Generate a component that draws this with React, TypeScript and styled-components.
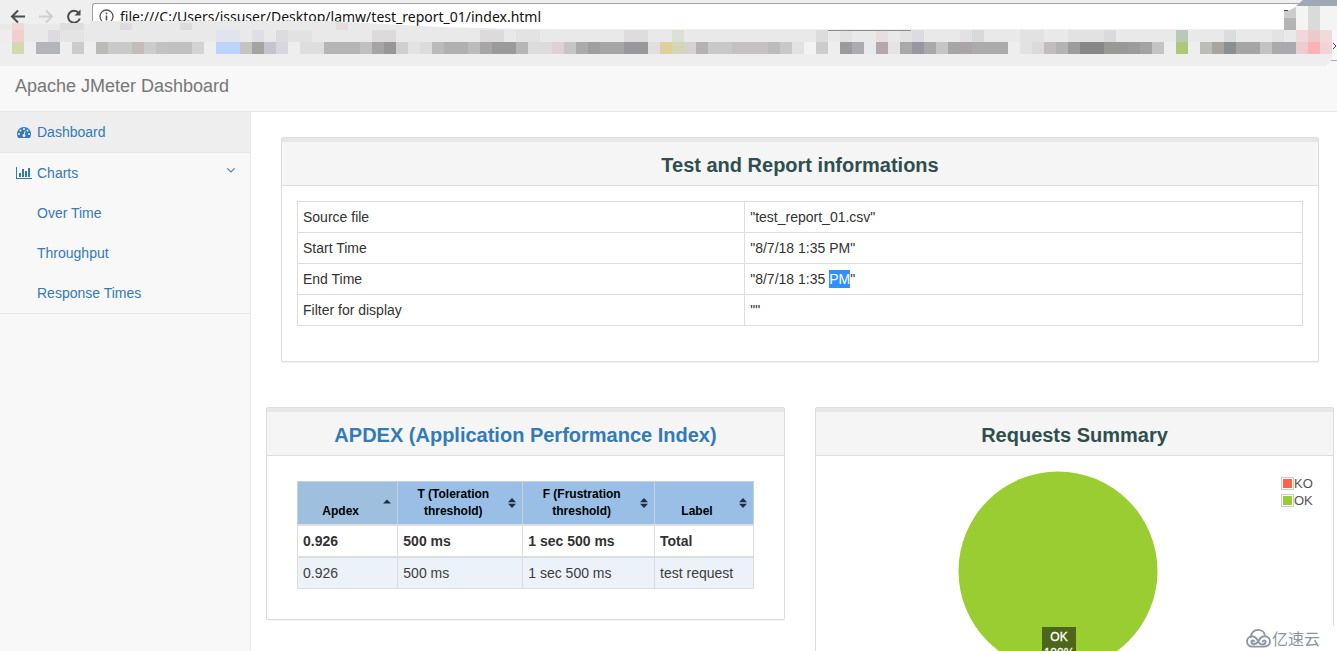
import React from 'react';
import styled, { createGlobalStyle, css } from 'styled-components';

const GlobalStyle = createGlobalStyle`
  * { box-sizing: border-box; }
  body {
    margin: 0;
    background: #fff;
    color: #333;
    font-family: "Liberation Sans", Arial, sans-serif;
    font-size: 14px;
    line-height: 20px;
  }
  table { border-collapse: collapse; }
`;

const Page = styled.div`
  position: relative;
  display: flex;
  flex-direction: column;
  height: 100vh;
  overflow: hidden;
`;

/* ---------- browser bar ---------- */

const BrowserBar = styled.header`
  position: relative;
  flex: none;
  display: flex;
  align-items: flex-start;
  height: 66px;
  padding-top: 3px;
  background: #efefef;
`;

const NavButtons = styled.div`
  display: flex;
  gap: 8px;
  padding: 3px 8px 0;
`;

const NavButton = styled.button`
  width: 20px;
  height: 20px;
  padding: 0;
  border: 0;
  background: none;
  color: #4c4c4c;
  &:disabled { color: #cfcfcf; }
  svg { display: block; }
`;

const AddressBox = styled.label`
  flex: 1;
  display: flex;
  align-items: center;
  gap: 6px;
  height: 26px;
  padding-left: 6px;
  border: 1px solid #a2a2a2;
  border-right: 0;
  border-bottom: 0;
  border-radius: 3px 0 0 0;
  background: #fff;
`;

const AddressInput = styled.input`
  flex: 1;
  min-width: 0;
  height: 20px;
  padding: 0;
  border: 0;
  outline: 0;
  background: none;
  color: #111;
  font: 14px/20px "Noto Sans", "Open Sans", sans-serif;
`;

const Mosaic = styled.svg`
  position: absolute;
  inset: 0;
  width: 100%;
  height: 66px;
  pointer-events: none;
`;

/* [first column, column count, colour] */
type Run = [number, number, string];

const lowerRuns: Run[] = [
  [1, 1, '#d3d8ae'], [3, 2, '#b4b5b8'], [6, 1, '#cbcbcb'], [8, 1, '#bcbab8'], [9, 2, '#c9c9c9'],
  [11, 1, '#c4bcba'], [12, 1, '#cccccc'], [13, 1, '#c4c2c1'], [14, 2, '#c2bfbf'], [16, 1, '#d3d3d3'],
  [18, 2, '#b9d3fb'], [20, 1, '#c4c4c2'], [21, 1, '#a4a49f'], [22, 1, '#c4c4ce'], [23, 1, '#d6d6dc'],
  [25, 2, '#dedede'], [27, 3, '#b5b5b5'], [30, 1, '#c0c0c0'], [31, 1, '#a5a5a5'], [32, 1, '#979797'],
  [33, 1, '#cfcfcf'], [34, 1, '#e2e4e4'], [35, 1, '#dcdcdc'], [36, 1, '#bababa'], [37, 2, '#b0b0b0'],
  [39, 1, '#bbbbbb'], [40, 1, '#a6a6a6'], [41, 2, '#9a9a9a'], [43, 1, '#b6b6b6'], [44, 2, '#dcdcde'],
  [46, 1, '#dfd0d6'], [47, 1, '#c5c5c5'], [48, 1, '#aaaaaa'], [49, 1, '#9f9f9f'], [50, 2, '#a6a6a6'],
  [52, 2, '#98979c'], [54, 1, '#e0e0e0'], [55, 1, '#ddd09c'], [56, 1, '#d6d5b4'], [57, 1, '#d6d2d2'],
  [58, 1, '#b6b2b1'], [59, 2, '#c8c8c8'], [61, 3, '#c6c1c1'], [64, 1, '#bbbbbb'], [65, 1, '#c8c8c8'],
  [66, 1, '#e2e2e2'], [67, 1, '#f3f3f3'], [68, 1, '#cccccc'], [70, 1, '#9b9b9d'], [71, 1, '#acabb0'],
  [72, 1, '#e6eaec'], [73, 1, '#b5a7ab'], [74, 1, '#e4e4e4'], [75, 1, '#a9a9a9'], [76, 1, '#9896a0'],
  [77, 1, '#a9a9a9'], [78, 1, '#c5c5c5'], [79, 1, '#a6a6a6'], [80, 1, '#aaa5a8'], [81, 3, '#ababab'],
  [85, 1, '#e2e2e2'], [86, 1, '#dadada'], [87, 1, '#c2bdbc'], [88, 1, '#b4b4b4'], [89, 1, '#9c9c9a'],
  [90, 2, '#868786'], [92, 2, '#989995'], [94, 1, '#9a9c9c'], [95, 1, '#a3a3a3'], [96, 1, '#c3c3c3'],
  [98, 1, '#adc876'], [100, 1, '#b8beba'], [101, 1, '#a8a4a0'], [102, 1, '#8c8f8f'], [103, 2, '#a5a5a5'],
  [105, 1, '#c2c2c2'], [106, 2, '#a9aaae'], [108, 1, '#ebcdd0'], [109, 1, '#f9b3b6'], [110, 1, '#f3d3d3'],
];

const upperRuns: Run[] = [
  [0, 1, '#f0ecec'], [1, 1, '#f3cdd0'], [4, 1, '#dcdce0'], [5, 2, '#e4e4e4'], [18, 2, '#e0e4ee'],
  [21, 1, '#dedfe4'], [23, 1, '#dcdcde'], [24, 2, '#e2e2e2'], [31, 2, '#dcdada'], [40, 2, '#dcdada'],
  [43, 2, '#e3e3e4'], [52, 2, '#dedcdc'], [56, 1, '#d9e2d4'], [68, 1, '#dcdcdc'], [70, 1, '#e2e2e2'],
  [73, 1, '#e6dfe0'], [75, 1, '#e2e2e2'], [76, 1, '#dcdbe0'], [80, 1, '#e4e1e4'], [81, 1, '#d9d9dc'],
  [85, 2, '#e2e2e2'], [89, 3, '#e2e2e2'], [92, 1, '#dadade'], [98, 1, '#b9c8b7'], [102, 1, '#dadcde'],
  [106, 1, '#e3e3e3'], [108, 1, '#f0d8da'], [109, 1, '#eccaca'], [110, 1, '#f0dada'],
];

const topRuns: Run[] = [
  [1, 1, '#eed8da'], [5, 2, '#dedede'], [10, 1, '#dddbde'], [15, 1, '#dcdcdc'], [28, 1, '#e6dcde'],
];

const CELL = 12;

function Runs({ runs, y, height = CELL }: { runs: Run[]; y: number; height?: number }) {
  return (
    <g shapeRendering="crispEdges">
      {runs.map(([col, count, fill]) => (
        <rect key={col} x={col * CELL} y={y} width={count * CELL} height={height} fill={fill} />
      ))}
    </g>
  );
}

function BookmarkMosaic() {
  return (
    <Mosaic viewBox="0 0 1337 66" preserveAspectRatio="none" aria-hidden="true">
      <path d="M0 30V24H90V21H330L440 27L560 30H1337V42H0Z" fill="#e9e9e9" />
      <Runs runs={topRuns} y={23} height={7} />
      <Runs runs={upperRuns} y={30} />
      <rect y="42" width="1337" height="24" fill="#eeeeee" />
      <Runs runs={lowerRuns} y={42} />
      <path d="M828 30.500H911" stroke="#8e8e8e" />
      <path d="M1284 10H1290L1302 3V30H1284Z" fill="#f1f1f1" />
      <path d="M1296 6H1337V30H1296Z" fill="#f4f4f4" />
      <path d="M1284 11L1290 10L1296 7V18H1284Z" fill="#cccccc" />
      <path d="M1284 18H1296V30H1284Z" fill="#b4b4b4" />
      <path d="M1308 6H1320V30H1308Z" fill="#dadada" />
      <path d="M1284 10.500H1288" stroke="#444" />
      <path d="M1303 0H1337V6H1296Z" fill="#a0a8b6" />
      <path d="M1332 30H1337V66H1326L1332 60Z" fill="#f8f8f8" />
      <path d="M1333 43L1336 46L1333 49" fill="none" stroke="#444" />
      <path d="M1331 60.500H1337" stroke="#aaa" />
    </Mosaic>
  );
}

/* ---------- dashboard frame ---------- */

const TopBar = styled.div`
  flex: none;
  height: 46px;
  padding: 10px 15px;
  border-bottom: 1px solid #e7e7e7;
  background: #f8f8f8;
`;

const Brand = styled.a`
  color: #777;
  font-size: 18px;
  text-decoration: none;
`;

const Columns = styled.div`
  flex: 1;
  display: flex;
  min-height: 0;
`;

const Sidebar = styled.nav`
  flex: none;
  width: 251px;
  border-right: 1px solid #e7e7e7;
  background: #f8f8f8;
`;

const MenuList = styled.ul`
  margin: 0;
  padding: 0;
  list-style: none;
`;

const MenuItem = styled.li`
  border-bottom: 1px solid #e7e7e7;
`;

const MenuLink = styled.a<{ $active?: boolean; $nested?: boolean }>`
  display: flex;
  align-items: center;
  gap: 5px;
  height: 40px;
  padding: 0 12px 0 ${p => (p.$nested ? 37 : 16)}px;
  background: ${p => (p.$active ? '#eee' : 'transparent')};
  color: #337ab7;
  text-decoration: none;
`;

const IconSlot = styled.span`
  display: flex;
  justify-content: center;
  width: 16px;
`;

const Arrow = styled.span`
  display: flex;
  margin-left: auto;
  padding-bottom: 6px;
`;

const Main = styled.main`
  flex: 1;
  min-width: 0;
`;

const InfoSection = styled.div`
  padding: 25px 18px 0 30px;
`;

const PanelGrid = styled.div`
  display: grid;
  grid-template-columns: 1fr 1fr;
  gap: 30px;
  align-items: start;
  padding: 45px 3px 0 15px;
`;

/* ---------- panels ---------- */

const Panel = styled.section`
  border: 1px solid #ddd;
  border-radius: 2px;
  background: #fff;
  box-shadow: 0 1px 1px rgba(0, 0, 0, 0.05);
`;

const PanelHeading = styled.div`
  height: 48px;
  padding-top: 11px;
  border-top: 4px solid #e7e7e7;
  border-bottom: 1px solid #ddd;
  background: #f5f5f5;
  text-align: center;
`;

const PanelTitle = styled.h2`
  margin: 0;
  color: darkslategray;
  font-size: 20px;
  line-height: 24px;
  a { color: #337ab7; text-decoration: none; }
`;

const PanelBody = styled.div<{ $wide?: boolean }>`
  padding: ${p => (p.$wide ? '25px 30px 30px' : '15px 15px 35px')};
`;

const InfoTable = styled.table`
  width: 100%;
  table-layout: fixed;
  th, td {
    height: 31px;
    padding: 5px;
    border: 1px solid #ddd;
    font-weight: normal;
    text-align: left;
  }
  th { width: 44.5%; }
`;

const Selected = styled.mark`
  padding: 1px 0;
  background: #338fff;
  color: #fff;
`;

const ApdexTable = styled.table`
  width: 100%;
  table-layout: fixed;
`;

const HeadCell = styled.th<{ $sorted?: boolean }>`
  height: 43px;
  padding: 3px 0 4px;
  border: 1px solid #c6d3df;
  background: ${p => (p.$sorted ? '#9fbfdf' : '#99bfe6')};
  color: #000;
  font-size: 12px;
  line-height: 17px;
  vertical-align: bottom;
`;

const SortButton = styled.button`
  display: flex;
  align-items: center;
  width: 100%;
  height: 34px;
  padding: 0 6px 0 0;
  border: 0;
  background: none;
  color: inherit;
  font: inherit;
`;

const SortLabel = styled.span`
  flex: 1;
  align-self: flex-end;
`;

const Row = styled.tr<{ $total?: boolean }>`
  ${p => p.$total && css`
    font-weight: bold;
    border-top: 2px solid #ddd;
    border-bottom: 2px solid #ddd;
  `}
  background: ${p => (p.$total ? '#fff' : '#ebf2fa')};
  color: ${p => (p.$total ? '#333' : '#3d3d3d')};
  td {
    height: 32px;
    padding: 5px;
    border-left: 1px solid #ddd;
    border-right: 1px solid #ddd;
    border-bottom: 1px solid #ddd;
  }
`;

/* ---------- requests summary ---------- */

const SummaryBody = styled.div`
  display: flex;
  align-items: flex-start;
  height: 300px;
  padding: 15px;
`;

const PieArea = styled.div`
  flex: 1;
  display: flex;
  justify-content: center;
  padding-left: 4px;
`;

const Pie = styled.div`
  position: relative;
  width: 200px;
  height: 200px;
`;

const PieLabel = styled.div`
  position: absolute;
  top: 156px;
  left: 84px;
  width: 34px;
  padding: 2px 0;
  background: rgba(0, 0, 0, 0.5);
  color: #fff;
  font-size: 12px;
  line-height: 16px;
  text-align: center;
  -webkit-text-stroke: 0.3px #fff;
`;

const Legend = styled.ul`
  width: 37px;
  margin: 0;
  padding: 4px 0 0;
  list-style: none;
  color: #545454;
  font-size: 13px;
  line-height: 17px;
`;

const LegendItem = styled.li`
  display: flex;
  align-items: center;
`;

const Swatch = styled.span<{ $color: string }>`
  width: 13px;
  height: 13px;
  padding: 1px;
  border: 1px solid #ccc;
  background: ${p => p.$color} content-box;
`;

const Watermark = styled.div`
  position: absolute;
  right: 0;
  bottom: 0;
  display: flex;
  align-items: center;
  width: 92px;
  height: 25px;
  background: #fff;
  color: #8d95a5;
  font: 16px/22px "Noto Sans CJK SC", sans-serif;
`;

const WatermarkText = styled.span`
  padding-bottom: 2px;
`;

const GaugeIcon = () => (
  <svg width="14" height="14" viewBox="0 0 1792 1792" fill="currentColor" aria-hidden="true">
    <path d="M384 1152q0-53-37.500-90.500t-90.500-37.500-90.500 37.500-37.500 90.500 37.500 90.500 90.500 37.500 90.500-37.500 37.500-90.500zm192-448q0-53-37.500-90.500t-90.500-37.500-90.500 37.500-37.500 90.500 37.500 90.500 90.500 37.500 90.500-37.500 37.500-90.500zm428 481l101-382q6-26-7.500-48.500t-38.500-29.500-48 6.500-30 39.500l-101 382q-60 5-107 43.500t-63 98.500q-20 77 20 146t117 89 146-20 89-117q16-60-6-117t-72-91zm660-33q0-53-37.500-90.500t-90.500-37.500-90.500 37.500-37.500 90.500 37.500 90.500 90.500 37.500 90.500-37.500 37.500-90.500zm-640-640q0-53-37.500-90.500t-90.500-37.500-90.500 37.500-37.500 90.500 37.500 90.500 90.500 37.500 90.500-37.500 37.500-90.500zm448 192q0-53-37.500-90.500t-90.500-37.500-90.500 37.500-37.500 90.500 37.500 90.500 90.500 37.500 90.500-37.500 37.500-90.500zm320 448q0 261-141 483-19 29-54 29h-1402q-35 0-54-29-141-221-141-483 0-182 71-348t191-286 286-191 348-71 348 71 286 191 191 286 71 348z" />
  </svg>
);

const BarsIcon = () => (
  <svg width="16" height="14" viewBox="0 0 2048 1792" fill="currentColor" aria-hidden="true">
    <path d="M640 896v512h-256v-512h256zm384-512v1024h-256v-1024h256zm1024 1152v128h-2048v-1536h128v1408h1920zm-640-896v768h-256v-768h256zm384-384v1152h-256v-1152h256z" />
  </svg>
);

const AngleDown = () => (
  <svg width="14" height="14" viewBox="0 0 1792 1792" fill="currentColor" aria-hidden="true">
    <path d="M1395 736q0 13-10 23l-466 466q-10 10-23 10t-23-10l-466-466q-10-10-10-23t10-23l50-50q10-10 23-10t23 10l393 393 393-393q10-10 23-10t23 10l50 50q10 10 10 23z" />
  </svg>
);

const SortIcon = ({ sorted }: { sorted?: boolean }) => (
  <svg width="8" height="10" viewBox="0 0 8 10" fill="#1d2f42" aria-hidden="true">
    <path d={sorted ? 'M4 1.500L8 5.500H0Z' : 'M4 0L8 4.200H0Z'} />
    {!sorted && <path d="M4 10L8 5.800H0Z" />}
  </svg>
);

const CloudIcon = () => (
  <svg width="27" height="21" viewBox="0 0 28 22" fill="none" stroke="#8d95a5" strokeWidth="2" strokeLinecap="round" aria-hidden="true">
    <path d="M6 9.500C6 5 9.500 2 13.500 2C17 2 20 4.200 20.500 7" />
    <path d="M14 14.500C12 10.500 9.500 8.500 6.800 8.700C4 9 2 11.500 2 14C2 17.500 4.500 19.500 7.500 19.500H20C23.500 19.500 26 17 26 14C26 11 23.500 8.700 20.500 8.700C16.500 8.700 15 11.500 13 15C11.500 17.600 6.500 17.800 6.500 14.500C6.500 12.800 9 12.500 9.500 14.200" />
    <path d="M14.500 15.500C16 18 21.500 17.800 21.500 14.500C21.500 12.600 18.800 12.500 18.500 14.200" />
  </svg>
);

const infoRows: [string, React.ReactNode][] = [
  ['Source file', '"test_report_01.csv"'],
  ['Start Time', '"8/7/18 1:35 PM"'],
  ['End Time', <>"8/7/18 1:35 <Selected>PM</Selected>"</>],
  ['Filter for display', '""'],
];

const apdexHeads = ['Apdex', 'T (Toleration threshold)', 'F (Frustration threshold)', 'Label'];
const apdexRows = [
  ['0.926', '500 ms', '1 sec 500 ms', 'Total'],
  ['0.926', '500 ms', '1 sec 500 ms', 'test request'],
];

const ApdexCol = styled.col<{ $share: number }>`
  width: ${p => p.$share}%;
`;

export default function App() {
  return (
    <Page>
      <GlobalStyle />
      <BrowserBar>
        <NavButtons>
          <NavButton aria-label="Back">
            <svg width="20" height="20" viewBox="0 0 20 20" fill="none" stroke="currentColor" strokeWidth="2">
              <path d="M17 10.500H4.500M10 4.500L4 10.500L10 16.500" />
            </svg>
          </NavButton>
          <NavButton aria-label="Forward" disabled>
            <svg width="20" height="20" viewBox="0 0 20 20" fill="none" stroke="currentColor" strokeWidth="2">
              <path d="M3 10.500H15.500M10 4.500L16 10.500L10 16.500" />
            </svg>
          </NavButton>
          <NavButton aria-label="Reload">
            <svg width="20" height="20" viewBox="0 0 20 20" fill="none" stroke="currentColor" strokeWidth="2">
              <path d="M14.800 7A6 6 0 1 0 15.800 12.500" />
              <path d="M16.500 3.500V9.500H10.500Z" fill="currentColor" stroke="none" />
            </svg>
          </NavButton>
        </NavButtons>
        <AddressBox>
          <svg width="15" height="15" viewBox="0 0 15 15" fill="none" stroke="#555" aria-hidden="true">
            <circle cx="7.500" cy="7.500" r="6.500" strokeWidth="1.300" />
            <path d="M7.500 6.500V11.500M7.500 3.500V5.200" strokeWidth="1.600" />
          </svg>
          <AddressInput
            aria-label="Address"
            defaultValue="file:///C:/Users/issuser/Desktop/lamw/test_report_01/index.html"
          />
        </AddressBox>
        <BookmarkMosaic />
      </BrowserBar>

      <TopBar>
        <Brand href="#">Apache JMeter Dashboard</Brand>
      </TopBar>

      <Columns>
        <Sidebar>
          <MenuList>
            <MenuItem>
              <MenuLink href="#" $active><IconSlot><GaugeIcon /></IconSlot>Dashboard</MenuLink>
            </MenuItem>
            <MenuItem>
              <MenuLink href="#">
                <IconSlot><BarsIcon /></IconSlot>Charts<Arrow><AngleDown /></Arrow>
              </MenuLink>
              <MenuList>
                {['Over Time', 'Throughput', 'Response Times'].map(name => (
                  <li key={name}><MenuLink href="#" $nested>{name}</MenuLink></li>
                ))}
              </MenuList>
            </MenuItem>
          </MenuList>
        </Sidebar>

        <Main>
          <InfoSection>
            <Panel>
              <PanelHeading><PanelTitle>Test and Report informations</PanelTitle></PanelHeading>
              <PanelBody>
                <InfoTable>
                  <tbody>
                    {infoRows.map(([name, value]) => (
                      <tr key={name}><th scope="row">{name}</th><td>{value}</td></tr>
                    ))}
                  </tbody>
                </InfoTable>
              </PanelBody>
            </Panel>
          </InfoSection>

          <PanelGrid>
            <Panel>
              <PanelHeading>
                <PanelTitle><a href="#">APDEX (Application Performance Index)</a></PanelTitle>
              </PanelHeading>
              <PanelBody $wide>
                <ApdexTable>
                  <colgroup>
                    <ApdexCol $share={22} />
                    <ApdexCol $share={27.4} />
                    <ApdexCol $share={28.9} />
                    <ApdexCol $share={21.7} />
                  </colgroup>
                  <thead>
                    <tr>
                      {apdexHeads.map((head, i) => (
                        <HeadCell key={head} scope="col" $sorted={i === 0}>
                          <SortButton><SortLabel>{head}</SortLabel><SortIcon sorted={i === 0} /></SortButton>
                        </HeadCell>
                      ))}
                    </tr>
                  </thead>
                  <tbody>
                    {apdexRows.map((cells, r) => (
                      <Row key={r} $total={r === 0}>
                        {cells.map((cell, i) => <td key={i}>{cell}</td>)}
                      </Row>
                    ))}
                  </tbody>
                </ApdexTable>
              </PanelBody>
            </Panel>

            <Panel>
              <PanelHeading><PanelTitle>Requests Summary</PanelTitle></PanelHeading>
              <SummaryBody>
                <PieArea>
                  <Pie>
                    <svg width="200" height="200" viewBox="0 0 200 200" role="img" aria-label="Requests summary">
                      <circle cx="100" cy="100" r="99.500" fill="#9acd32" />
                    </svg>
                    <PieLabel>OK<br />100%</PieLabel>
                  </Pie>
                </PieArea>
                <Legend>
                  <LegendItem><Swatch $color="#ff6347" />KO</LegendItem>
                  <LegendItem><Swatch $color="#9acd32" />OK</LegendItem>
                </Legend>
              </SummaryBody>
            </Panel>
          </PanelGrid>
        </Main>
      </Columns>
      <Watermark><CloudIcon /><WatermarkText>亿速云</WatermarkText></Watermark>
    </Page>
  );
}
